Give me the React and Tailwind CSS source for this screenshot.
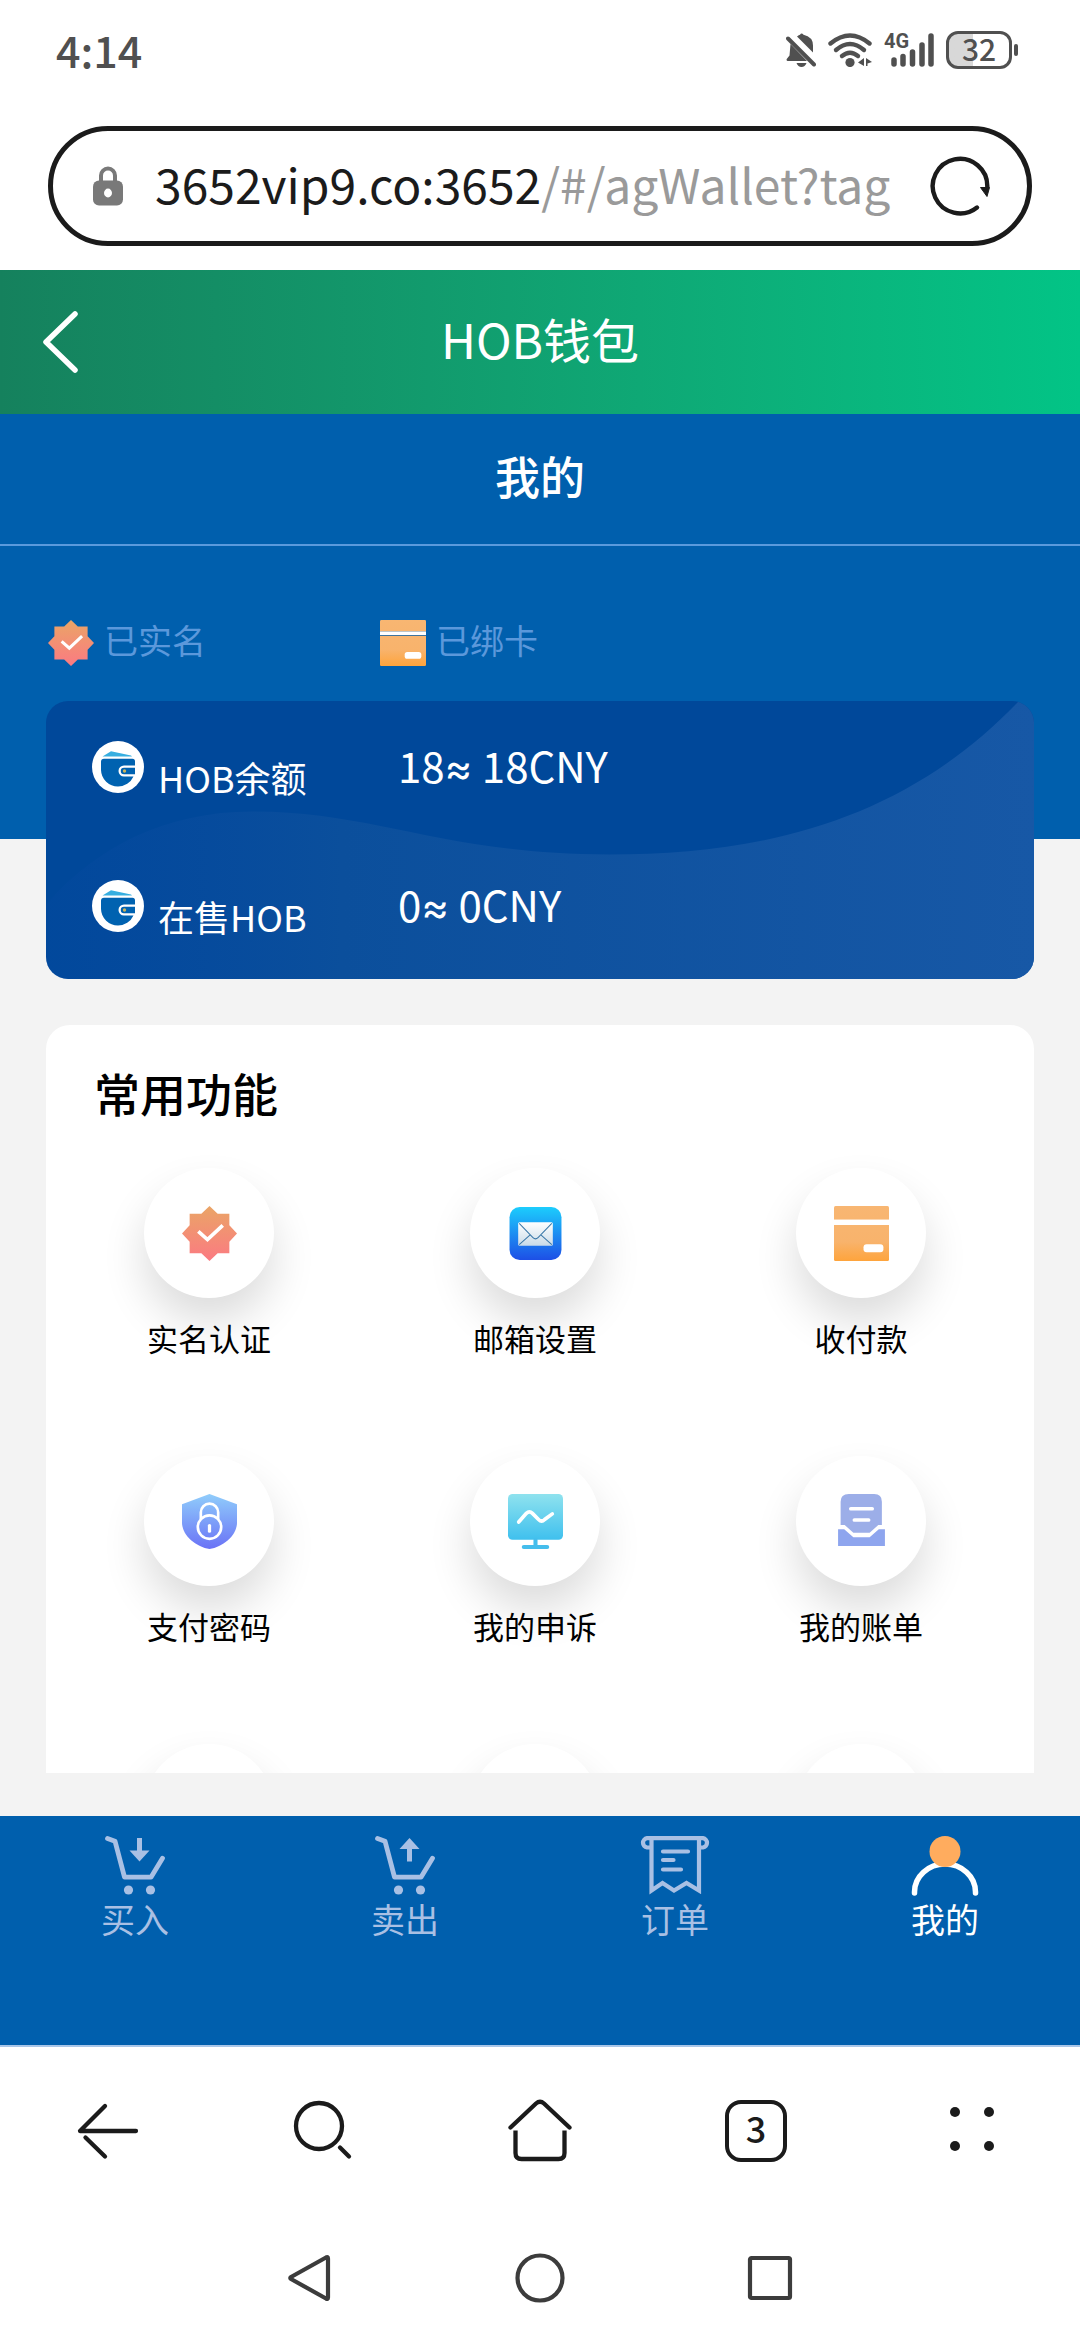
import { useState } from "react";

const cards = [
  { key: "balance", label: "HOB余额", amount: "18", converted: "18CNY" },
  { key: "selling", label: "在售HOB", amount: "0", converted: "0CNY" },
];

function BadgeIcon({ className, id }) {
  return (
    <svg className={className} viewBox="0 0 54 54">
      <defs>
        <linearGradient id={id} x1="0" y1="0" x2="0" y2="1">
          <stop offset="0" stopColor="#eaa566" />
          <stop offset="1" stopColor="#fb7a82" />
        </linearGradient>
      </defs>
      <path
        fill={`url(#${id})`}
        d="M27 0l8 7.500h11.500V19L54 27l-7.500 8v11.500H35L27 54l-8-7.500H7.500V35L0 27l7.500-8V7.500H19z"
      />
      <path d="M16 25l9 8 15-14" fill="none" stroke="#fff" strokeWidth="3.600" />
    </svg>
  );
}

function CardIcon({ className, id }) {
  return (
    <svg className={className} viewBox="0 0 54 54">
      <defs>
        <linearGradient id={id} x1="0" y1="0" x2="0" y2="54" gradientUnits="userSpaceOnUse">
          <stop offset="0" stopColor="#f8b672" />
          <stop offset="0.65" stopColor="#f8b36c" />
          <stop offset="1" stopColor="#fea43c" />
        </linearGradient>
      </defs>
      <path fill={`url(#${id})`} d="M1.500 0h51Q54 0 54 1.500V13.600H0V1.500Q0 0 1.500 0z" />
      <path fill="#fff" d="M0 13.600h54v4H0z" />
      <path fill={`url(#${id})`} d="M0 18.600h54V52.500Q54 54 52.500 54h-51Q0 54 0 52.500z" />
      <rect x="29" y="37.500" width="19.500" height="8" rx="3" fill="#fff" />
    </svg>
  );
}

function MailIcon({ className }) {
  return (
    <svg className={className} viewBox="0 0 54 54">
      <defs>
        <linearGradient id="mail-bg" x1="0" y1="0" x2="0" y2="1">
          <stop offset="0" stopColor="#1ccdfd" />
          <stop offset="1" stopColor="#1d4fe6" />
        </linearGradient>
        <linearGradient id="mail-paper" x1="0" y1="0" x2="0" y2="1">
          <stop offset="0" stopColor="#ffffff" />
          <stop offset="1" stopColor="#c9dbe8" />
        </linearGradient>
      </defs>
      <rect x="1.500" y="1" width="51" height="52" rx="10" fill="url(#mail-bg)" />
      <rect x="10" y="16" width="34" height="23" rx="1.500" fill="url(#mail-paper)" />
      <path
        d="M11 17l13.500 14q2.500 2.500 5 0L43 17M11 38l11-10M43 38L32 28"
        fill="none"
        stroke="#3a78a8"
        strokeWidth="1"
      />
    </svg>
  );
}

function ShieldIcon({ className }) {
  return (
    <svg className={className} viewBox="0 0 54 54">
      <defs>
        <linearGradient id="shield" x1="0" y1="0" x2="0" y2="1">
          <stop offset="0" stopColor="#90cdfb" />
          <stop offset="1" stopColor="#6a72f6" />
        </linearGradient>
      </defs>
      <path fill="url(#shield)" d="M27 0l27 10v18c0 13-14 24-27 26C14 52 0 41 0 28V10z" />
      <g fill="none" stroke="#fff" strokeWidth="2.600">
        <path d="M18.500 25v-7a8.500 8.500 0 0 1 17 0v7" />
        <circle cx="27" cy="32.500" r="11.500" />
        <path d="M27 31v5.500" strokeWidth="3.200" strokeLinecap="round" />
      </g>
    </svg>
  );
}

function MonitorIcon({ className }) {
  return (
    <svg className={className} viewBox="0 0 54 54">
      <defs>
        <linearGradient id="monitor" x1="0" y1="0" x2="0" y2="1">
          <stop offset="0" stopColor="#8fe2ee" />
          <stop offset="1" stopColor="#3fc0ee" />
        </linearGradient>
      </defs>
      <rect width="54" height="45" rx="4.500" fill="url(#monitor)" />
      <path d="M27 45v6M15.500 52h23" stroke="#45bdec" strokeWidth="4" strokeLinecap="round" />
      <path
        d="M10.500 27.500L18 19q3-3 6 0l6 6q3 3 6 0l7.500-5.500"
        fill="none"
        stroke="#fff"
        strokeWidth="3.600"
        strokeLinecap="round"
      />
    </svg>
  );
}

function BillIcon({ className }) {
  return (
    <svg className={className} viewBox="0 0 54 54">
      <path
        fill="#9caee8"
        d="M14.500 0h25Q47 0 47 7.500V30.500h-3.500L35 38H19l-8.500-7.500H6.500V7.500Q6.500 0 14.500 0z"
      />
      <path fill="#8ea5ee" d="M4 34.500h6l9 8h16l9-8h6V51H4z" />
      <path d="M16.500 14.500h21M20 25.500h14" stroke="#fff" strokeWidth="3.600" strokeLinecap="round" />
    </svg>
  );
}

function WalletIcon() {
  return (
    <svg className="size-[52px] shrink-0" viewBox="0 0 52 52">
      <circle cx="26" cy="26" r="26" fill="#fff" />
      <path fill="#36aee0" d="M10.500 15.500L19 10.300l20 4.200 1 1z" />
      <path
        fill="#0062b0"
        d="M12 17.800h28.500q2.500 0 2.500 2.500v4.200H32a5.500 5.500 0 0 0 0 11h9.500A17 17 0 0 1 26 45.500 17 17 0 0 1 9 29v-8.200q0-3 3-3z"
      />
      <path fill="#0062b0" d="M32 26.800h11v6.500H32a3.200 3.200 0 0 1 0-6.500z" />
      <circle cx="32.500" cy="30" r="1.700" fill="#c9b45a" />
    </svg>
  );
}

function CartIcon({ up }) {
  return (
    <svg className="h-[60px] w-[60px]" viewBox="0 0 60 60" fill="none" stroke="currentColor">
      <path d="M2.500 2.500l7.500 2.700 9.500 36H46l11.500-19" strokeWidth="4.800" strokeLinecap="round" strokeLinejoin="round" />
      <g fill="currentColor" stroke="none">
        <circle cx="23.500" cy="54" r="4.600" />
        <circle cx="45.500" cy="54" r="4.600" />
        {up ? (
          <path d="M34.500 2l10 11H37v12.500h-5V13h-7.500z" />
        ) : (
          <path d="M34.500 25.500l10-11H37V2h-5v12.500h-7.500z" />
        )}
      </g>
    </svg>
  );
}

function OrderIcon() {
  return (
    <svg className="h-[60px] w-[70px]" viewBox="0 0 70 60" fill="none" stroke="currentColor">
      <path d="M11.500 11.500H7a4.700 4.700 0 0 1 0-9.300h56a4.700 4.700 0 0 1 0 9.300h-4.500" strokeWidth="4.200" />
      <path d="M11.500 2.500v52l11-7.500 11.500 7.500L46.500 47l12.500 7.500v-52" strokeWidth="4.200" />
      <path d="M23 15.500h25M23 24h10.500M23 33.500h18" strokeWidth="4.200" strokeLinecap="round" />
    </svg>
  );
}

function UserIcon() {
  return (
    <svg className="h-[60px] w-[68px]" viewBox="0 0 68 60">
      <path d="M3.500 57v-1a30.500 28 0 0 1 61 0v1" fill="none" stroke="#fff" strokeWidth="5.500" strokeLinecap="round" />
      <circle cx="34" cy="15.500" r="15.500" fill="#ffac5e" />
    </svg>
  );
}

const features = [
  { label: "实名认证", icon: <BadgeIcon id="feature-badge" className="size-[55px]" /> },
  { label: "邮箱设置", icon: <MailIcon className="size-[55px]" /> },
  { label: "收付款", icon: <CardIcon id="feature-card" className="size-[55px]" /> },
  { label: "支付密码", icon: <ShieldIcon className="size-[55px]" /> },
  { label: "我的申诉", icon: <MonitorIcon className="size-[55px]" /> },
  { label: "我的账单", icon: <BillIcon className="size-[55px]" /> },
  {},
  {},
  {},
];

const tabs = [
  { key: "buy", label: "买入", icon: <CartIcon /> },
  { key: "sell", label: "卖出", icon: <CartIcon up /> },
  { key: "orders", label: "订单", icon: <OrderIcon /> },
  { key: "mine", label: "我的", icon: <UserIcon /> },
];

function StatusBar() {
  return (
    <div className="flex h-[104px] shrink-0 items-center justify-between pr-[62px] pl-14 text-[#505050]">
      <span className="pb-1.5 text-[43px] leading-none font-medium">4:14</span>
      <div className="flex items-center gap-3 pb-1">
        <svg className="h-[34px] w-[30px]" viewBox="0 0 30 34" fill="currentColor">
          <path d="M11 3.500q2-1.500 3-1.700 1.500-2.500 3.500 0Q27 4 27 12.500v7z" />
          <path d="M4.500 11L21 28H1.500q-2-1 0-3l2-2.500z" />
          <path d="M10.500 30h10q-1.500 4-5 4t-5-4z" />
          <path d="M2 5.500l26 26" stroke="currentColor" strokeWidth="4" strokeLinecap="round" />
        </svg>
        <svg className="h-[34px] w-[44px]" viewBox="0 0 44 34" fill="none" stroke="currentColor" strokeWidth="4.400" strokeLinecap="round">
          <path d="M2.500 10.500q19.500-16 39 0" />
          <path d="M8 17q14-12 28 0" />
          <path d="M14 23q8-6.500 16 0" />
          <circle cx="22" cy="29.500" r="4.600" fill="currentColor" stroke="none" />
          <path d="M36 25v8l-6-3.500zM38 25v8h1.500v-2.500l4.500-1.500z" fill="currentColor" stroke="none" />
        </svg>
        <div className="relative">
          <span className="absolute top-0 left-0 font-['Roboto',sans-serif] text-xl leading-4 font-bold">4G</span>
          <svg className="h-[34px] w-[50px]" viewBox="0 0 50 34" stroke="currentColor" strokeWidth="5.500" strokeLinecap="round">
            <path d="M10 31v-4M19 31v-7.500M28.500 31V19M38 31V12M47 31V3" />
          </svg>
        </div>
        <div className="flex items-center gap-0.5">
          <div className="flex h-[38px] w-[66px] items-center justify-center rounded-xl border-3 border-[#505050] bg-linear-to-r from-[#d8d8d8] from-40% to-white to-40% pb-1 text-3xl leading-none font-medium">
            32
          </div>
          <div className="h-3 w-1 rounded-full bg-[#505050]" />
        </div>
      </div>
    </div>
  );
}

function AddressBar() {
  return (
    <div className="shrink-0 px-12 pt-[22px] pb-6">
      <div className="flex h-[120px] items-center rounded-full border-5 border-[#1b1b1b] pr-[37px] pl-10">
        <svg className="h-10 w-[30px]" viewBox="0 0 30 40">
          <path d="M8 16V9.500a7 7 0 0 1 14 0V16" fill="none" stroke="#797979" strokeWidth="4" />
          <rect y="14.500" width="30" height="25" rx="6" fill="#797979" />
          <ellipse cx="15" cy="27" rx="4" ry="4.400" fill="#fff" />
        </svg>
        <button className="min-w-0 flex-1 truncate pb-1.5 pl-8 text-left text-5xl leading-[72px] text-[#1b1b1b]">
          3652vip9.co:3652<span className="text-[#9a9a9a]">/#/agWallet?tag</span>
        </button>
        <button aria-label="刷新">
          <svg className="size-[60px]" viewBox="0 0 60 60">
            <path d="M47 51.500A27.300 27.300 0 1 1 57.300 31" fill="none" stroke="#1b1b1b" strokeWidth="4.400" strokeLinecap="round" />
            <path d="M50.500 31.500h9l-2.500 9z" fill="#1b1b1b" stroke="#1b1b1b" strokeLinejoin="round" />
          </svg>
        </button>
      </div>
    </div>
  );
}

function BrowserToolbar() {
  return (
    <div className="grid h-[168px] shrink-0 grid-cols-5 place-items-center bg-white">
      <button aria-label="后退">
        <svg className="size-16" viewBox="0 0 64 64" fill="none" stroke="#1b1b1b" strokeWidth="4.300" strokeLinecap="round">
          <path d="M60 32H4L29 7M9.500 38.500L29 57.500" strokeLinejoin="round" />
        </svg>
      </button>
      <button aria-label="搜索">
        <svg className="size-16" viewBox="0 0 64 64" fill="none" stroke="#1b1b1b" strokeWidth="4.300" strokeLinecap="round">
          <circle cx="27" cy="27" r="23" />
          <path d="M48 48.500l9 9" />
        </svg>
      </button>
      <button aria-label="主页">
        <svg className="size-16" viewBox="0 0 64 64" fill="none" stroke="#1b1b1b" strokeWidth="4.300" strokeLinecap="round">
          <path d="M2.500 28.500L28 4.500q4-3.500 8 0l25.500 24" />
          <path d="M7.500 31.500V54q0 6 6 6h37q6 0 6-6V31.500" strokeLinecap="butt" />
        </svg>
      </button>
      <button className="flex size-[62px] items-center justify-center rounded-2xl border-4 border-[#1b1b1b] pb-2 text-4xl leading-none font-medium text-[#1b1b1b]">
        3
      </button>
      <button aria-label="菜单" className="grid grid-cols-2 gap-6 pb-1">
        <span className="size-[10px] rounded-full bg-[#1b1b1b]" />
        <span className="size-[10px] rounded-full bg-[#1b1b1b]" />
        <span className="size-[10px] rounded-full bg-[#1b1b1b]" />
        <span className="size-[10px] rounded-full bg-[#1b1b1b]" />
      </button>
    </div>
  );
}

function SystemBar() {
  return (
    <div className="flex h-[125px] shrink-0 items-center justify-center gap-[180px] bg-white">
      <button aria-label="返回">
        <svg className="size-[50px]" viewBox="0 0 50 50" fill="none" stroke="#3c3c3c" strokeWidth="4.200">
          <path d="M43 5.500v39q0 2-2 1L6 26q-1.500-1 0-2L41 4.500q2-1 2 1z" strokeLinejoin="round" />
        </svg>
      </button>
      <button aria-label="桌面">
        <svg className="size-[50px]" viewBox="0 0 50 50" fill="none" stroke="#3c3c3c" strokeWidth="4.200">
          <circle cx="25" cy="25" r="22.500" />
        </svg>
      </button>
      <button aria-label="最近任务">
        <svg className="size-[50px]" viewBox="0 0 50 50" fill="none" stroke="#3c3c3c" strokeWidth="4.200">
          <rect x="5" y="5" width="40" height="40" rx="1.500" />
        </svg>
      </button>
    </div>
  );
}

export default function App() {
  const [active, setActive] = useState("mine");

  return (
    <div className="flex h-screen flex-col overflow-hidden bg-white font-['Noto_Sans_CJK_SC',sans-serif]">
      <StatusBar />
      <AddressBar />

      <header className="grid h-36 shrink-0 grid-cols-[1fr_auto_1fr] items-center bg-linear-to-r from-[#15815d] to-[#02c486] text-white">
        <button aria-label="返回" className="pl-10">
          <svg className="h-16 w-10" viewBox="0 0 40 64" fill="none" stroke="#fff" strokeWidth="5.500" strokeLinecap="round" strokeLinejoin="round">
            <path d="M35 4L6 32l29 28" />
          </svg>
        </button>
        <h1 className="pb-2 text-5xl">HOB钱包</h1>
      </header>

      <main className="flex min-h-0 flex-1 flex-col bg-[#f3f3f3]">
        <section className="shrink-0 bg-[#005fad]">
          <h2 className="border-b-2 border-[#5a9add] pt-[30px] pb-9 text-center text-[45px] leading-[64px] font-medium text-white">
            我的
          </h2>
          <div className="grid grid-cols-3 pt-[68px] pr-9 pb-[33px] pl-12 text-[34px] leading-[56px] text-[#5b98db]">
            <div className="flex items-start gap-[10px]">
              <BadgeIcon id="status-badge" className="mt-[6px] size-[46px]" />
              <span className="-mt-0.5">已实名</span>
            </div>
            <div className="flex items-start gap-[10px]">
              <CardIcon id="status-card" className="mt-[6px] size-[46px]" />
              <span className="-mt-0.5">已绑卡</span>
            </div>
          </div>
          {/* lower half of the balance card hangs below the blue area */}
          <div className="h-[138px]" />
        </section>

        <section className="relative mx-[46px] -mt-[138px] shrink-0 overflow-hidden rounded-[22px] bg-[#00489a] text-white">
          <svg className="absolute inset-0 size-full" viewBox="0 0 988 277" preserveAspectRatio="none">
            <defs>
              <linearGradient id="wave" x1="0" y1="0" x2="1" y2="0">
                <stop offset="0" stopColor="#0649a0" stopOpacity="0.3" />
                <stop offset="0.3" stopColor="#0b4f9c" />
                <stop offset="1" stopColor="#1758a6" />
              </linearGradient>
            </defs>
            <path
              fill="url(#wave)"
              d="M0 203C50 145 120 110 206 110 330 110 400 153 563 153 720 153 860 118 973 0h15v277H0z"
            />
          </svg>
          {cards.map((card) => (
            <div key={card.key} className="relative flex h-[139px] items-start pt-[34px] pr-6 pl-[46px]">
              <div className="mt-[6px] flex w-1/3 items-baseline gap-[14px] text-4xl leading-[60px]">
                <WalletIcon />
                {card.label}
              </div>
              <div className="text-[42px] leading-[60px]">
                {card.amount}
                <span className="font-['Inter',sans-serif]">≈</span> {card.converted}
              </div>
            </div>
          ))}
        </section>

        <section className="mx-[46px] mt-[46px] mb-[43px] min-h-0 flex-1 overflow-hidden rounded-t-[24px] bg-white text-black">
          <h3 className="pt-[35px] pl-12 text-[46px] leading-[64px] font-medium">常用功能</h3>
          <div className="grid grid-cols-3 gap-y-[98px] pt-11 pr-[10px]">
            {features.map((item, i) => (
              <button key={i} className="flex flex-col items-center gap-5">
                <span className="flex size-[130px] items-center justify-center rounded-full bg-white shadow-[0_24px_44px_rgba(0,0,0,0.14)]">
                  {item.icon}
                </span>
                <span className="text-[31px] leading-[40px]">{item.label}</span>
              </button>
            ))}
          </div>
        </section>
      </main>

      <nav className="grid h-[231px] shrink-0 grid-cols-4 items-start border-b-2 border-[#a8c6e8] bg-[#005fad] pt-5">
        {tabs.map((tab) => (
          <button
            key={tab.key}
            onClick={() => setActive(tab.key)}
            className={`flex flex-col items-center text-[34px] leading-[46px] ${
              active === tab.key ? "text-white" : "text-[#a9c0e4]"
            }`}
          >
            {tab.icon}
            {tab.label}
          </button>
        ))}
      </nav>

      <BrowserToolbar />
      <SystemBar />
    </div>
  );
}
